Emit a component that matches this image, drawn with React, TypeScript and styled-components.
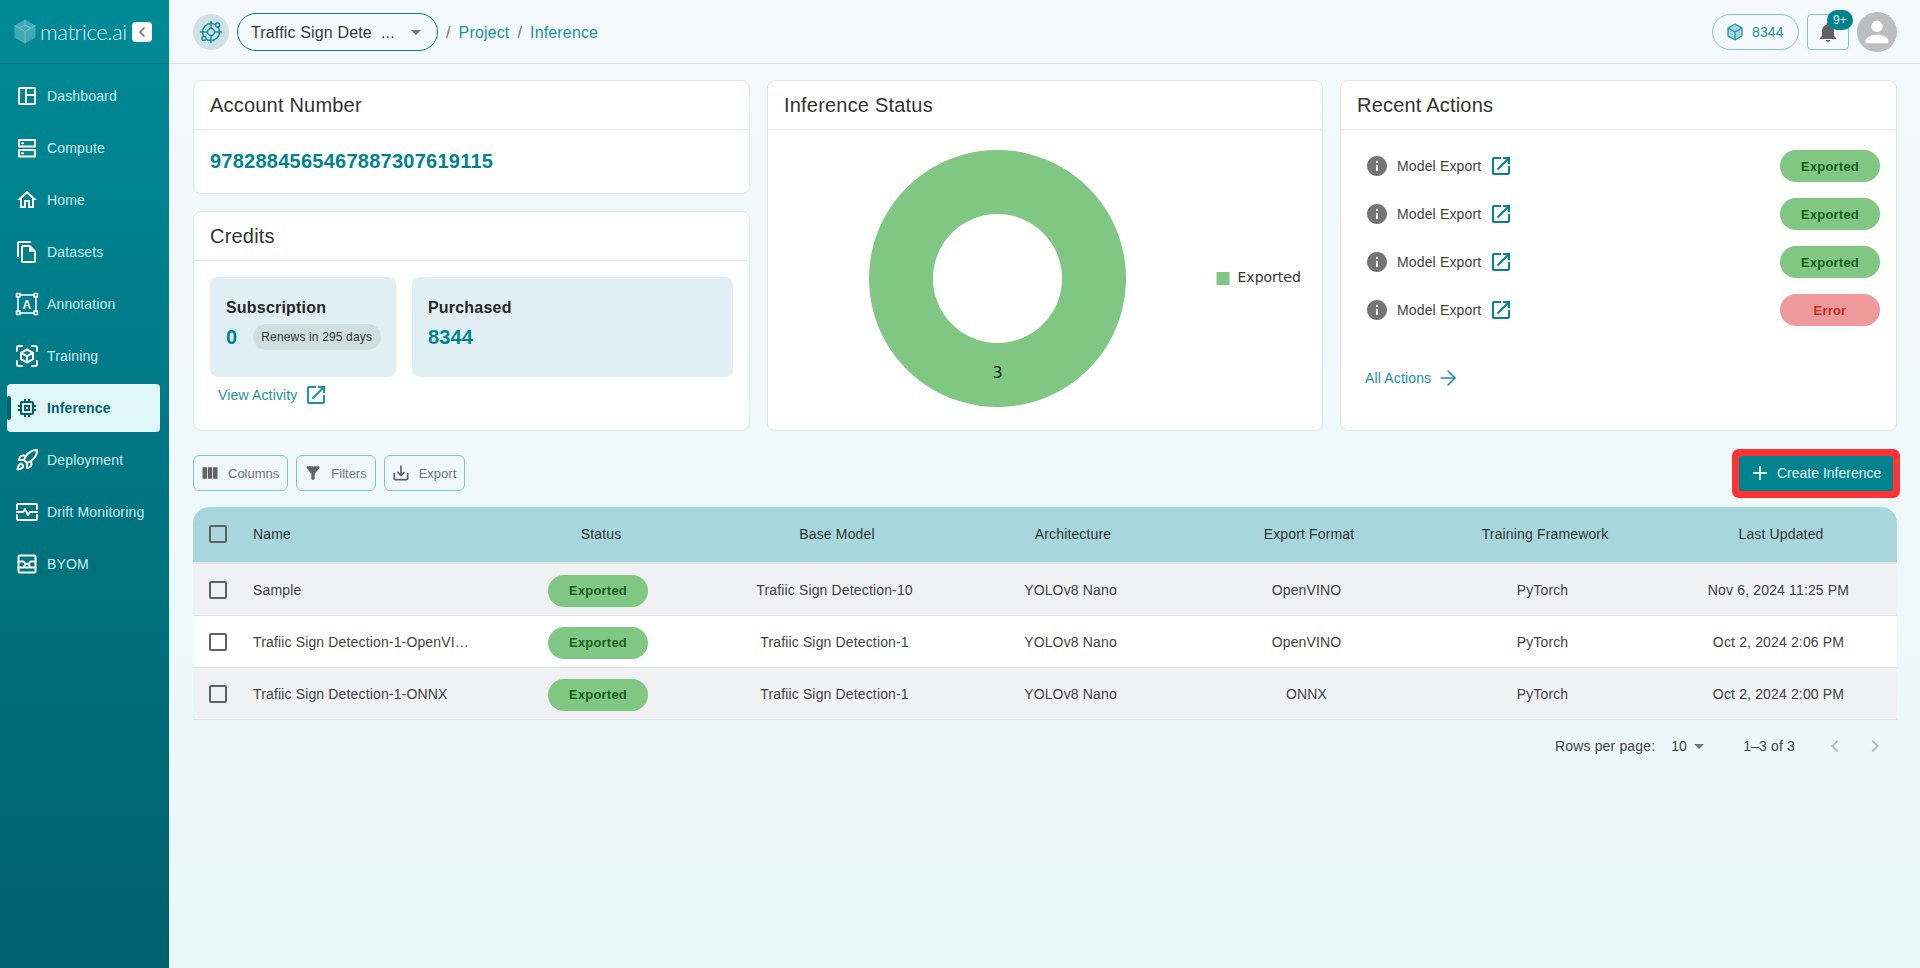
import React from "react";
import styled, { createGlobalStyle } from "styled-components";
import { ArrowRight, ChevronLeft, Rocket } from "lucide-react";

const GlobalStyle = createGlobalStyle`
  html, body {
    margin: 0;
    padding: 0;
    height: 100%;
    overflow: hidden;
    font-family: "Liberation Sans", Arial, sans-serif;
    letter-spacing: 0.15px;
  }
  * { box-sizing: border-box; }
`;

const Shell = styled.div`
  display: flex;
  width: 1920px;
  height: 968px;
`;

const Sidebar = styled.aside`
  width: 169px;
  flex-shrink: 0;
  display: flex;
  flex-direction: column;
  background: linear-gradient(180deg, #008a97 0%, #00616c 100%);
`;

const Brand = styled.div`
  height: 64px;
  display: flex;
  align-items: center;
  padding-left: 14px;
  border-bottom: 1px solid #007480;
`;

const BrandName = styled.span`
  font-family: Lato, sans-serif;
  font-weight: 300;
  font-size: 22px;
  letter-spacing: -0.4px;
  color: #d5f1f4;
  margin-left: 4px;
  width: 92px;
  white-space: nowrap;
`;

const CollapseButton = styled.div`
  width: 20px;
  height: 20px;
  border-radius: 4px;
  background: #fff;
  color: #6f6f6f;
  display: flex;
  align-items: center;
  justify-content: center;
`;

const Nav = styled.nav`
  display: flex;
  flex-direction: column;
  gap: 4px;
  padding: 8px 9px 0 7px;
`;

const NavRow = styled.div<{ $active?: boolean }>`
  position: relative;
  height: 48px;
  display: flex;
  align-items: center;
  gap: 8px;
  padding-left: 8px;
  border-radius: 4px;
  font-size: 14px;
  font-weight: ${({ $active }) => ($active ? 700 : 400)};
  color: ${({ $active }) => ($active ? "#00606b" : "#cdeef2")};
  background: ${({ $active }) => ($active ? "#e0f7fa" : "transparent")};

  svg {
    flex-shrink: 0;
    color: ${({ $active }) => ($active ? "#00606b" : "#fff")};
  }
`;

const ActiveMark = styled.span`
  position: absolute;
  left: 0;
  top: 12px;
  width: 4px;
  height: 24px;
  border-radius: 2px;
  background: #00606b;
`;

const Main = styled.main`
  flex: 1;
  min-width: 0;
  display: flex;
  flex-direction: column;
  background: linear-gradient(180deg, #f5f9fb 0%, #e8f8fa 100%);
`;

const TopBar = styled.header`
  height: 64px;
  flex-shrink: 0;
  display: flex;
  align-items: center;
  padding: 1px 23px 0 24px;
  border-bottom: 1px solid #dde3e5;
`;

const ProjectIcon = styled.div`
  width: 36px;
  height: 36px;
  border-radius: 50%;
  background: #cfe2e6;
  color: #1b8e9c;
  display: flex;
  align-items: center;
  justify-content: center;
  margin-right: 8px;
`;

const ProjectSelect = styled.div`
  width: 201px;
  height: 38px;
  border: 1.5px solid #00838f;
  border-radius: 19px;
  display: flex;
  align-items: center;
  justify-content: space-between;
  padding: 1px 9px 0 13px;
  font-size: 16px;
  white-space: pre;
  color: #3a3a3a;

  svg {
    color: #757575;
    margin-top: -1px;
  }
`;

const Crumbs = styled.div`
  display: flex;
  align-items: center;
  gap: 8px;
  margin-left: 8px;
  padding-top: 1px;
  font-size: 16px;
  color: #757575;
`;

const CrumbLink = styled.span`
  color: #1a93a1;
`;

const TopRight = styled.div`
  margin-left: auto;
  display: flex;
  align-items: center;
  gap: 8px;
`;

const CreditPill = styled.div`
  width: 87px;
  height: 36px;
  border: 1px solid #7fc4ce;
  border-radius: 18px;
  display: flex;
  align-items: center;
  gap: 8px;
  padding-left: 13px;
  font-size: 14px;
  color: #1a93a1;
`;

const BellButton = styled.div`
  position: relative;
  width: 42px;
  height: 36px;
  border: 1px solid #7fc4ce;
  border-radius: 4px;
  display: flex;
  align-items: center;
  justify-content: center;
  color: #616161;
`;

const Badge = styled.span`
  position: absolute;
  top: -5px;
  right: -5px;
  width: 26px;
  height: 20px;
  border-radius: 10px;
  background: #00838f;
  color: #e0f7fa;
  font-size: 12px;
  display: flex;
  align-items: center;
  justify-content: center;
`;

const Avatar = styled.div`
  width: 40px;
  height: 40px;
  border-radius: 50%;
  background: #bdbdbd;
  color: #fff;
  display: flex;
  align-items: center;
  justify-content: center;
`;

const Content = styled.div`
  flex: 1;
  padding: 16px 23px 0 24px;
`;

const CardGrid = styled.div`
  display: grid;
  grid-template-columns: 557px 556px 1fr;
  gap: 17px;
  height: 351px;
`;

const Column = styled.div`
  display: flex;
  flex-direction: column;
  gap: 17px;
  min-height: 0;
`;

const Card = styled.section<{ $height?: number }>`
  display: flex;
  flex-direction: column;
  background: #fff;
  border: 1px solid #e1e5e7;
  border-radius: 8px;
  ${({ $height }) => ($height ? `height: ${$height}px;` : "flex: 1;")}
`;

const CardTitle = styled.h2`
  height: 49px;
  flex-shrink: 0;
  margin: 0;
  padding: 0 16px;
  display: flex;
  align-items: center;
  border-bottom: 1px solid #e1e5e7;
  font-size: 20px;
  font-weight: 400;
  letter-spacing: 0.2px;
  color: #333;
`;

const AccountValue = styled.div`
  flex: 1;
  padding: 0 16px;
  display: flex;
  align-items: center;
  font-size: 20px;
  font-weight: 700;
  letter-spacing: 0.25px;
  color: #00838f;
`;

const CreditsBody = styled.div`
  padding: 16px;
`;

const CreditBoxes = styled.div`
  display: grid;
  grid-template-columns: 186px 1fr;
  gap: 16px;
`;

const CreditBox = styled.div`
  height: 100px;
  padding: 0 16px 5px;
  border-radius: 8px;
  background: #e0eff3;
  display: flex;
  flex-direction: column;
  justify-content: center;
  gap: 7px;
`;

const CreditLabel = styled.div`
  font-size: 16px;
  font-weight: 700;
  letter-spacing: 0.2px;
  color: #262626;
`;

const CreditLine = styled.div`
  display: flex;
  align-items: center;
  gap: 16px;
  height: 26px;
`;

const CreditValue = styled.span`
  font-size: 20px;
  font-weight: 700;
  color: #00838f;
`;

const RenewPill = styled.span`
  height: 26px;
  padding: 0 9px 0 8px;
  border-radius: 13px;
  background: #cfdfe0;
  color: #333;
  font-size: 12px;
  flex-shrink: 0;
  white-space: nowrap;
  display: flex;
  align-items: center;
`;

const TextLink = styled.div<{ $gap?: number }>`
  display: flex;
  align-items: center;
  gap: ${({ $gap }) => $gap ?? 6}px;
  font-size: 14px;
  color: #1a93a1;

  svg {
    color: #1a93a1;
  }
`;

const ActivityLink = styled(TextLink)`
  margin: 6px 0 0 8px;
  height: 24px;
`;

const ChartBody = styled.div`
  flex: 1;
  min-height: 0;
  letter-spacing: 0;

  svg {
    display: block;
  }
`;

const ActionList = styled.div`
  display: flex;
  flex-direction: column;
  gap: 16px;
  padding: 20px 16px 0 24px;
`;

const ActionRow = styled.div`
  height: 32px;
  display: flex;
  align-items: center;
  font-size: 14px;
  color: #424242;

  > svg:nth-child(1) {
    color: #757575;
    margin-right: 8px;
  }

  > svg:nth-child(2) {
    color: #00838f;
    margin-left: 8px;
  }
`;

const StatusPill = styled.span<{ $error?: boolean }>`
  width: 100px;
  height: 32px;
  border-radius: 16px;
  display: inline-flex;
  align-items: center;
  justify-content: center;
  font-size: 13px;
  font-weight: 700;
  letter-spacing: 0.2px;
  background: ${({ $error }) => ($error ? "#ef9a9a" : "#81c784")};
  color: ${({ $error }) => ($error ? "#c62828" : "#1b5e20")};
`;

const ActionPill = styled(StatusPill)`
  margin-left: auto;
`;

const AllActions = styled(TextLink)`
  margin: 40px 0 0 24px;
`;

const Toolbar = styled.div`
  display: flex;
  align-items: center;
  gap: 8px;
  margin-top: 24px;
  padding-right: 4px;
  height: 36px;
`;

const ToolButton = styled.div`
  height: 36px;
  padding: 0 8px 0 6px;
  display: flex;
  align-items: center;
  gap: 8px;
  border: 1px solid #7fc7d0;
  border-radius: 6px;
  font-size: 13px;
  color: #757575;
  letter-spacing: 0;

  svg {
    color: #616161;
  }
`;

const CreateButton = styled.div`
  margin-left: auto;
  width: 154px;
  height: 35px;
  display: flex;
  align-items: center;
  gap: 5px;
  padding-left: 9px;
  background: #00838f;
  border-radius: 2px;
  box-shadow: 0 0 0 7px #ff3333;
  font-size: 14px;
  letter-spacing: 0;
  color: #e0f7fa;
`;

const Table = styled.div`
  margin-top: 16px;
  overflow: hidden;
`;

const GridRow = styled.div`
  display: grid;
  grid-template-columns: 50px 240px repeat(6, 236px);
  align-items: center;
`;

const HeadRow = styled(GridRow)`
  height: 57px;
  padding-bottom: 1px;
  background: #a7d7dc;
  border-bottom: 2px solid #e0e2e4;
  border-radius: 16px 16px 0 0;
  font-size: 14px;
  color: #333;
`;

const BodyRow = styled(GridRow)<{ $shaded?: boolean }>`
  height: 52px;
  background: ${({ $shaded }) => ($shaded ? "#f0f1f3" : "#fff")};
  border-bottom: 1px solid #dfe1e3;
  font-size: 14px;
  color: #424242;
`;

const Cell = styled.div`
  text-align: center;
  white-space: nowrap;
`;

const BodyCell = styled(Cell)`
  padding-right: 5px;
`;

const NameCell = styled.div`
  padding-left: 10px;
  white-space: nowrap;
`;

const PillCell = styled(Cell)`
  padding: 2px 6px 0 0;
  display: flex;
  justify-content: center;
`;

const CheckCell = styled.div`
  display: flex;
  justify-content: center;
`;

const CheckBox = styled.span`
  width: 18px;
  height: 18px;
  border: 2px solid #616161;
  border-radius: 2px;
`;

const Pagination = styled.div`
  height: 52px;
  display: flex;
  align-items: center;
  justify-content: flex-end;
  padding-right: 10px;
  font-size: 14px;
  color: #424242;
`;

const PageSize = styled.span`
  display: flex;
  align-items: center;
  margin-left: 16px;
  width: 56px;

  svg {
    color: #757575;
  }
`;

const PageCount = styled.span`
  margin-left: 16px;
`;

const PageArrows = styled.span`
  display: flex;
  align-items: center;
  gap: 16px;
  margin-left: 28px;
  color: #b4babd;
`;

const Glyph = ({ d, size = 24 }: { d: string; size?: number }) => (
  <svg width={size} height={size} viewBox="0 0 24 24" fill="currentColor">
    <path d={d} />
  </svg>
);

const Line = ({ children, size = 24, width = 2 }: { children: React.ReactNode; size?: number; width?: number }) => (
  <svg
    width={size}
    height={size}
    viewBox="0 0 24 24"
    fill="none"
    stroke="currentColor"
    strokeWidth={width}
    strokeLinecap="round"
    strokeLinejoin="round"
  >
    {children}
  </svg>
);

const paths = {
  home: "M12 5.69l5 4.5V18h-2v-6H9v6H7v-7.81l5-4.5M12 3L2 12h3v8h6v-6h2v6h6v-8h3L12 3z",
  copy: "M16 1H4c-1.1 0-2 .9-2 2v14h2V3h12V1zm-1 4l6 6v10c0 1.1-.9 2-2 2H7.99C6.89 23 6 22.1 6 21l.01-14c0-1.1.89-2 1.99-2h7zm-1 2H8v14h11V12h-5V7z",
  chip: "M15 9H9v6h6V9zm-2 4h-2v-2h2v2zm8-2V9h-2V7c0-1.1-.9-2-2-2h-2V3h-2v2h-2V3H9v2H7c-1.1 0-2 .9-2 2v2H3v2h2v2H3v2h2v2c0 1.1.9 2 2 2h2v2h2v-2h2v2h2v-2h2c1.1 0 2-.9 2-2v-2h2v-2h-2v-2h2zm-4 6H7V7h10v10z",
  openNew: "M19 19H5V5h7V3H5c-1.11 0-2 .9-2 2v14c0 1.1.89 2 2 2h14c1.1 0 2-.9 2-2v-7h-2v7zM14 3v2h3.59l-9.83 9.83 1.41 1.41L19 6.41V10h2V3h-7z",
  info: "M12 2C6.48 2 2 6.48 2 12s4.48 10 10 10 10-4.48 10-10S17.52 2 12 2zm1 15h-2v-6h2v6zm0-8h-2V7h2v2z",
  dropdown: "M7 10l5 5 5-5z",
  bell: "M12 22c1.1 0 2-.9 2-2h-4c0 1.1.89 2 2 2zm6-6v-5c0-3.07-1.64-5.64-4.5-6.32V4c0-.83-.67-1.5-1.5-1.5s-1.5.67-1.5 1.5v.68C7.63 5.36 6 7.92 6 11v5l-2 2v1h16v-1l-2-2z",
  person: "M12 12c2.21 0 4-1.79 4-4s-1.79-4-4-4-4 1.79-4 4 1.79 4 4 4zm0 2c-2.67 0-8 1.34-8 4v2h16v-2c0-2.66-5.33-4-8-4z",
  columns: "M14.67 5v14H9.33V5h5.34zm1 14H21V5h-5.33v14zm-7.34 0V5H3v14h5.33z",
  filter: "M4.25 5.61C6.27 8.2 10 13 10 13v6c0 .55.45 1 1 1h2c.55 0 1-.45 1-1v-6s3.72-4.8 5.74-7.39c.51-.66.04-1.61-.79-1.61H5.04c-.83 0-1.3.95-.79 1.61z",
  save: "M19 12v7H5v-7H3v7c0 1.1.9 2 2 2h14c1.1 0 2-.9 2-2v-7h-2zm-6 .67l2.59-2.58L17 11.5l-5 5-5-5 1.41-1.41L11 12.67V3h2z",
  add: "M19 13h-6v6h-2v-6H5v-2h6V5h2v6h6v2z",
  prev: "M15.41 7.41L14 6l-6 6 6 6 1.41-1.41L10.83 12z",
  next: "M10 6L8.59 7.41 13.17 12l-4.58 4.59L10 18l6-6z",
};

const LogoCube = () => (
  <svg width="22" height="25" viewBox="0 0 22 25">
    <polygon points="11,0.5 21.5,6.5 21.5,18.5 11,24.5 0.5,18.5 0.5,6.5" fill="#41a9b5" />
    <path d="M0.5 6.5L11 12.5L21.5 6.5M11 12.5V24.5M11 0.5V6M5 9L11 6L17 9" fill="none" stroke="#6cc5cf" strokeWidth="1" />
  </svg>
);

const TargetIcon = () => (
  <Line size={24} width={1.5}>
    <circle cx="12" cy="12" r="8.5" />
    <circle cx="12" cy="12" r="3.5" />
    <path d="M12 1.5v7M12 15.5v7M1.5 12h7M15.5 12h7" />
    <circle cx="18.5" cy="5" r="2" fill="#cfe2e6" />
    <circle cx="5" cy="18.5" r="2" fill="#cfe2e6" />
  </Line>
);

const navItems: { label: string; icon: React.ReactNode; active?: boolean }[] = [
  {
    label: "Dashboard",
    icon: (
      <Line>
        <rect x="4" y="4" width="16" height="16" rx="1" />
        <path d="M11 4v16M11 11h9" />
      </Line>
    ),
  },
  {
    label: "Compute",
    icon: (
      <Line>
        <rect x="4" y="4" width="16" height="6.5" />
        <rect x="4" y="14" width="16" height="6.5" />
        <path d="M7 7.2h1M7 17.2h1" />
      </Line>
    ),
  },
  { label: "Home", icon: <Glyph d={paths.home} /> },
  { label: "Datasets", icon: <Glyph d={paths.copy} /> },
  {
    label: "Annotation",
    icon: (
      <Line width={1.5}>
        <path d="M4.5 3h15M4.5 21h15M3 4.5v15M21 4.5v15" />
        <rect x="1.5" y="1.5" width="3.5" height="3.5" />
        <rect x="19" y="1.5" width="3.5" height="3.5" />
        <rect x="1.5" y="19" width="3.5" height="3.5" />
        <rect x="19" y="19" width="3.5" height="3.5" />
        <text x="12" y="16.5" textAnchor="middle" fontSize="12" fontWeight="700" fill="currentColor" stroke="none" fontFamily="Liberation Sans">
          A
        </text>
      </Line>
    ),
  },
  {
    label: "Training",
    icon: (
      <Line>
        <path d="M2 7V4a2 2 0 0 1 2-2h3M17 2h3a2 2 0 0 1 2 2v3M22 17v3a2 2 0 0 1-2 2h-3M7 22H4a2 2 0 0 1-2-2v-3" />
        <path d="M12 5.5l6 3.3v6.4l-6 3.3-6-3.3V8.8zM6 8.8l6 3.3 6-3.3M12 12.1v6.4" />
      </Line>
    ),
  },
  { label: "Inference", icon: <Glyph d={paths.chip} />, active: true },
  { label: "Deployment", icon: <Rocket size={24} strokeWidth={2} /> },
  {
    label: "Drift Monitoring",
    icon: (
      <Line>
        <path d="M2 9V5a1 1 0 0 1 1-1h18a1 1 0 0 1 1 1v4M2 15v4a1 1 0 0 0 1 1h18a1 1 0 0 0 1-1v-4M2 12h6l2-3 3 6 2-3h7" />
      </Line>
    ),
  },
  {
    label: "BYOM",
    icon: (
      <Line>
        <rect x="3.5" y="3.5" width="17" height="17" rx="1" />
        <path d="M3.5 9.5h5l2 2.5h3l2-2.5h5M3.5 15.5h5l2-3.5M20.5 15.5h-5l-2-3.5M10 15.5h4" />
      </Line>
    ),
  },
];

const actions = ["Exported", "Exported", "Exported", "Error"];

const rows = [
  { name: "Sample", base: "Trafiic Sign Detection-10", format: "OpenVINO", date: "Nov 6, 2024 11:25 PM" },
  { name: "Trafiic Sign Detection-1-OpenVI…", base: "Trafiic Sign Detection-1", format: "OpenVINO", date: "Oct 2, 2024 2:06 PM" },
  { name: "Trafiic Sign Detection-1-ONNX", base: "Trafiic Sign Detection-1", format: "ONNX", date: "Oct 2, 2024 2:00 PM" },
];

const headers = ["Status", "Base Model", "Architecture", "Export Format", "Training Framework", "Last Updated"];

export default function App() {
  return (
    <Shell>
      <GlobalStyle />
      <Sidebar>
        <Brand>
          <LogoCube />
          <BrandName>matrice.ai</BrandName>
          <CollapseButton>
            <ChevronLeft size={16} strokeWidth={2.5} />
          </CollapseButton>
        </Brand>
        <Nav>
          {navItems.map((item) => (
            <NavRow key={item.label} $active={item.active}>
              {item.active && <ActiveMark />}
              {item.icon}
              {item.label}
            </NavRow>
          ))}
        </Nav>
      </Sidebar>
      <Main>
        <TopBar>
          <ProjectIcon>
            <TargetIcon />
          </ProjectIcon>
          <ProjectSelect>
            {"Traffic Sign Dete  ..."}
            <Glyph d={paths.dropdown} />
          </ProjectSelect>
          <Crumbs>
            <span>/</span>
            <CrumbLink>Project</CrumbLink>
            <span>/</span>
            <CrumbLink>Inference</CrumbLink>
          </Crumbs>
          <TopRight>
            <CreditPill>
              <svg width="18" height="18" viewBox="0 0 18 18">
                <polygon points="9,1 16,5 16,13 9,17 2,13 2,5" fill="#a7d7dc" stroke="#1a93a1" strokeWidth="1.2" strokeLinejoin="round" />
                <path d="M2 5l7 4 7-4M9 9v8" fill="none" stroke="#1a93a1" strokeWidth="1.2" />
              </svg>
              8344
            </CreditPill>
            <BellButton>
              <Glyph d={paths.bell} />
              <Badge>9+</Badge>
            </BellButton>
            <Avatar>
              <Glyph d={paths.person} size={34} />
            </Avatar>
          </TopRight>
        </TopBar>
        <Content>
          <CardGrid>
            <Column>
              <Card $height={114}>
                <CardTitle>Account Number</CardTitle>
                <AccountValue>9782884565467887307619115</AccountValue>
              </Card>
              <Card>
                <CardTitle>Credits</CardTitle>
                <CreditsBody>
                  <CreditBoxes>
                    <CreditBox>
                      <CreditLabel>Subscription</CreditLabel>
                      <CreditLine>
                        <CreditValue>0</CreditValue>
                        <RenewPill>Renews in 295 days</RenewPill>
                      </CreditLine>
                    </CreditBox>
                    <CreditBox>
                      <CreditLabel>Purchased</CreditLabel>
                      <CreditLine>
                        <CreditValue>8344</CreditValue>
                      </CreditLine>
                    </CreditBox>
                  </CreditBoxes>
                  <ActivityLink $gap={6}>
                    View Activity
                    <Glyph d={paths.openNew} />
                  </ActivityLink>
                </CreditsBody>
              </Card>
            </Column>
            <Card>
              <CardTitle>Inference Status</CardTitle>
              <ChartBody>
                <svg width="554" height="300" viewBox="0 0 554 300">
                  <path
                    fillRule="evenodd"
                    fill="#81c784"
                    d="M229.5 20a128.5 128.5 0 1 0 0.01 0zM229.5 84a64.5 64.5 0 1 1 -0.01 0z"
                  />
                  <text x="229.5" y="248" textAnchor="middle" fontSize="16" fontFamily="DejaVu Sans" fill="#222">
                    3
                  </text>
                  <rect x="448.5" y="142" width="13" height="13" fill="#81c784" />
                  <text x="469.5" y="152" fontSize="14" fontFamily="DejaVu Sans" fill="#333">
                    Exported
                  </text>
                </svg>
              </ChartBody>
            </Card>
            <Card>
              <CardTitle>Recent Actions</CardTitle>
              <ActionList>
                {actions.map((status, i) => (
                  <ActionRow key={i}>
                    <Glyph d={paths.info} />
                    Model Export
                    <Glyph d={paths.openNew} />
                    <ActionPill $error={status === "Error"}>{status}</ActionPill>
                  </ActionRow>
                ))}
              </ActionList>
              <AllActions $gap={5}>
                All Actions
                <ArrowRight size={24} strokeWidth={1.6} />
              </AllActions>
            </Card>
          </CardGrid>
          <Toolbar>
            <ToolButton>
              <Glyph d={paths.columns} size={20} />
              Columns
            </ToolButton>
            <ToolButton>
              <Glyph d={paths.filter} size={20} />
              Filters
            </ToolButton>
            <ToolButton>
              <Glyph d={paths.save} size={20} />
              Export
            </ToolButton>
            <CreateButton>
              <Glyph d={paths.add} />
              Create Inference
            </CreateButton>
          </Toolbar>
          <Table>
            <HeadRow>
              <CheckCell>
                <CheckBox />
              </CheckCell>
              <NameCell>Name</NameCell>
              {headers.map((h) => (
                <Cell key={h}>{h}</Cell>
              ))}
            </HeadRow>
            {rows.map((row, i) => (
              <BodyRow key={row.name} $shaded={i % 2 === 0}>
                <CheckCell>
                  <CheckBox />
                </CheckCell>
                <NameCell>{row.name}</NameCell>
                <PillCell>
                  <StatusPill>Exported</StatusPill>
                </PillCell>
                <BodyCell>{row.base}</BodyCell>
                <BodyCell>YOLOv8 Nano</BodyCell>
                <BodyCell>{row.format}</BodyCell>
                <BodyCell>PyTorch</BodyCell>
                <BodyCell>{row.date}</BodyCell>
              </BodyRow>
            ))}
          </Table>
          <Pagination>
            Rows per page:
            <PageSize>
              10
              <Glyph d={paths.dropdown} />
            </PageSize>
            <PageCount>1–3 of 3</PageCount>
            <PageArrows>
              <Glyph d={paths.prev} />
              <Glyph d={paths.next} />
            </PageArrows>
          </Pagination>
        </Content>
      </Main>
    </Shell>
  );
}
